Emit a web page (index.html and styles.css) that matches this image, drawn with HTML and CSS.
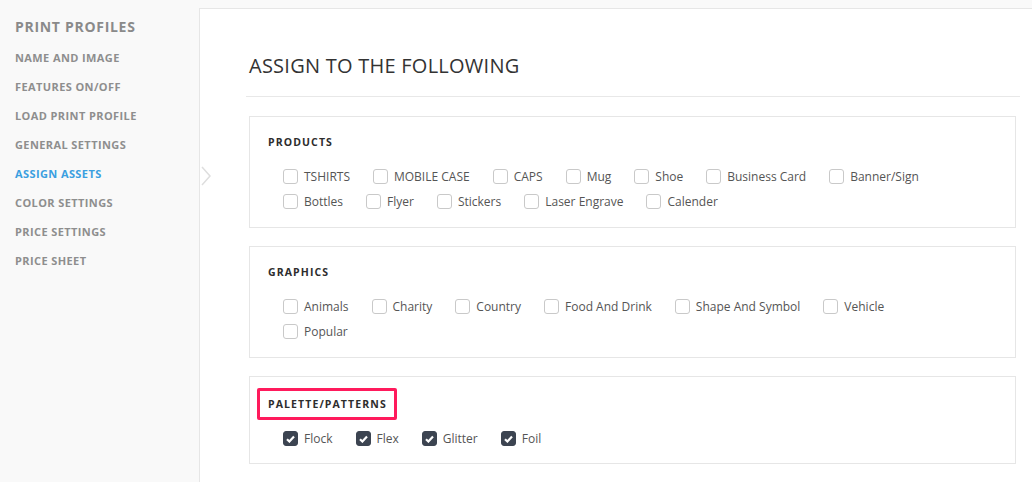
FILE: index.html
```html
<!DOCTYPE html>
<html>
<head>
<meta charset="utf-8">
<link rel="stylesheet" href="styles.css">
</head>
<body>
<aside class="sidebar">
  <div class="side-title">PRINT PROFILES</div>
  <nav class="side-nav">
    <a class="side-item">NAME AND IMAGE</a>
    <a class="side-item">FEATURES ON/OFF</a>
    <a class="side-item">LOAD PRINT PROFILE</a>
    <a class="side-item">GENERAL SETTINGS</a>
    <a class="side-item active">ASSIGN ASSETS</a>
    <a class="side-item">COLOR SETTINGS</a>
    <a class="side-item">PRICE SETTINGS</a>
    <a class="side-item">PRICE SHEET</a>
  </nav>
</aside>
<main class="main">
  <svg class="pointer" width="10" height="20" viewBox="0 0 10 20"><path d="M1 1 L9 10 L1 19" fill="none" stroke="#dedede" stroke-width="1.5"/></svg>
  <h1 class="heading">ASSIGN TO THE FOLLOWING</h1>

  <section class="panel">
    <h2 class="panel-title">PRODUCTS</h2>
    <div class="rows">
      <div class="row">
        <label class="item"><span class="box"></span><span class="lbl">TSHIRTS</span></label>
        <label class="item"><span class="box"></span><span class="lbl">MOBILE CASE</span></label>
        <label class="item"><span class="box"></span><span class="lbl">CAPS</span></label>
        <label class="item"><span class="box"></span><span class="lbl">Mug</span></label>
        <label class="item"><span class="box"></span><span class="lbl">Shoe</span></label>
        <label class="item"><span class="box"></span><span class="lbl">Business Card</span></label>
        <label class="item"><span class="box"></span><span class="lbl">Banner/Sign</span></label>
      </div>
      <div class="row">
        <label class="item"><span class="box"></span><span class="lbl">Bottles</span></label>
        <label class="item"><span class="box"></span><span class="lbl">Flyer</span></label>
        <label class="item"><span class="box"></span><span class="lbl">Stickers</span></label>
        <label class="item"><span class="box"></span><span class="lbl">Laser Engrave</span></label>
        <label class="item"><span class="box"></span><span class="lbl">Calender</span></label>
      </div>
    </div>
  </section>

  <section class="panel">
    <h2 class="panel-title">GRAPHICS</h2>
    <div class="rows">
      <div class="row">
        <label class="item"><span class="box"></span><span class="lbl">Animals</span></label>
        <label class="item"><span class="box"></span><span class="lbl">Charity</span></label>
        <label class="item"><span class="box"></span><span class="lbl">Country</span></label>
        <label class="item"><span class="box"></span><span class="lbl">Food And Drink</span></label>
        <label class="item"><span class="box"></span><span class="lbl">Shape And Symbol</span></label>
        <label class="item"><span class="box"></span><span class="lbl">Vehicle</span></label>
      </div>
      <div class="row">
        <label class="item"><span class="box"></span><span class="lbl">Popular</span></label>
      </div>
    </div>
  </section>

  <section class="panel panel-last">
    <h2 class="panel-title"><span class="highlight">PALETTE/PATTERNS</span></h2>
    <div class="rows">
      <div class="row">
        <label class="item"><span class="box checked"><svg width="9" height="8" viewBox="0 0 9 8"><path d="M1 4.2 L3.4 6.5 L8 1.5" fill="none" stroke="#fff" stroke-width="2.2"/></svg></span><span class="lbl">Flock</span></label>
        <label class="item"><span class="box checked"><svg width="9" height="8" viewBox="0 0 9 8"><path d="M1 4.2 L3.4 6.5 L8 1.5" fill="none" stroke="#fff" stroke-width="2.2"/></svg></span><span class="lbl">Flex</span></label>
        <label class="item"><span class="box checked"><svg width="9" height="8" viewBox="0 0 9 8"><path d="M1 4.2 L3.4 6.5 L8 1.5" fill="none" stroke="#fff" stroke-width="2.2"/></svg></span><span class="lbl">Glitter</span></label>
        <label class="item"><span class="box checked"><svg width="9" height="8" viewBox="0 0 9 8"><path d="M1 4.2 L3.4 6.5 L8 1.5" fill="none" stroke="#fff" stroke-width="2.2"/></svg></span><span class="lbl">Foil</span></label>
      </div>
    </div>
  </section>
</main>
</body>
</html>
```

FILE: styles.css
```css
* { box-sizing: border-box; }

html, body {
  margin: 0;
  padding: 0;
  height: 100%;
}

body {
  display: flex;
  background: #f9f9f9;
  font-family: "Open Sans", "Liberation Sans", sans-serif;
  overflow: hidden;
}

.sidebar {
  width: 199px;
  flex: none;
  padding: 18px 0 0 15px;
}

.side-title {
  font-family: "Open Sans", sans-serif;
  font-weight: 700;
  font-size: 14px;
  line-height: 18px;
  color: #8a8a8a;
  letter-spacing: 0.7px;
}

.side-nav {
  display: flex;
  flex-direction: column;
  margin-top: 7px;
}

.side-item {
  font-family: "Open Sans", sans-serif;
  font-weight: 700;
  font-size: 11px;
  line-height: 29px;
  color: #8e8e8e;
  letter-spacing: 0.4px;
}

.side-item.active {
  color: #3b9fe0;
}

.main {
  position: relative;
  flex: 1;
  margin-top: 8px;
  background: #fff;
  border-top: 1px solid #e6e6e6;
  border-left: 1px solid #e6e6e6;
  padding: 0 12px 0 46px;
}

.pointer {
  position: absolute;
  left: 1px;
  top: 157px;
}

.heading {
  margin: 45px 0 0;
  padding: 0 0 18px 3px;
  border-bottom: 1px solid #e8e8e8;
  font-family: "Open Sans", sans-serif;
  font-weight: 400;
  font-size: 20px;
  line-height: 24px;
  color: #333;
  letter-spacing: 0.25px;
}

.panel {
  margin: 19px 4px 0 3px;
  border: 1px solid #e6e6e6;
  padding: 17px 18px 13px 18px;
}

.panel + .panel {
  margin-top: 18px;
}

.panel-last {
  padding-top: 19px;
  padding-bottom: 12px;
}

.panel-title {
  margin: 0;
  font-family: "Open Sans", sans-serif;
  font-weight: 700;
  font-size: 10.5px;
  line-height: 16px;
  color: #2d2d2d;
  letter-spacing: 1.1px;
}

.highlight {
  position: relative;
  display: inline-block;
  line-height: 16px;
}

.highlight::after {
  content: "";
  position: absolute;
  left: -11px;
  right: -10px;
  top: -8px;
  bottom: -8px;
  border: 3px solid #ff1a5c;
  border-radius: 2px;
}

.rows {
  margin-top: 14px;
  padding-left: 15px;
}

.row {
  display: flex;
  height: 25px;
  align-items: center;
}

.item {
  display: flex;
  align-items: center;
  gap: 6px;
  margin-right: 23px;
}

.box {
  width: 15px;
  height: 15px;
  border: 1px solid #c9c9c9;
  border-radius: 3px;
  background: #fff;
  display: flex;
  align-items: center;
  justify-content: center;
}

.box.checked {
  background: #3c4451;
  border-color: #3c4451;
}

.lbl {
  font-family: "Open Sans", sans-serif;
  font-size: 12px;
  color: #555;
  line-height: 16px;
}
```
